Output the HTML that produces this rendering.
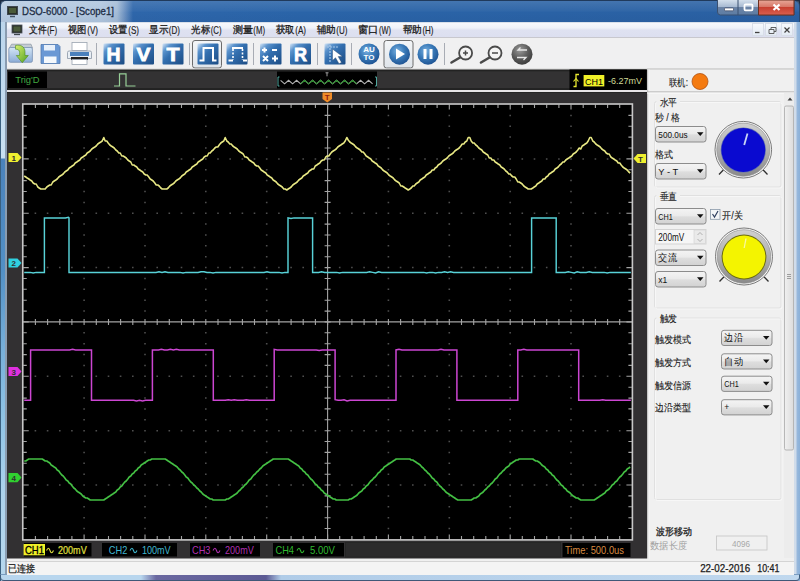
<!DOCTYPE html>
<html><head><meta charset="utf-8">
<style>
*{margin:0;padding:0;box-sizing:border-box}
html,body{width:800px;height:581px;overflow:hidden;background:#1c2c44}
body{position:relative;font-family:"Liberation Sans",sans-serif;font-size:12px;color:#000}
#titlebar{position:absolute;left:0;top:0;width:800px;height:22px;border-radius:6px 6px 0 0;
 background:linear-gradient(90deg,#b8cce2 0,#b0c6de 100px,#a4bcd6 116px,#6a90c0 124px,#2e66aa 132px,#2a64a8 300px,#2a60a2 100%);border-top:1px solid #203a5c;border-left:1px solid #284870;border-right:1px solid #284870}
#titlebar:after{content:"";position:absolute;left:0;top:0;right:0;height:21px;background:linear-gradient(180deg,rgba(255,255,255,.12) 0,rgba(255,255,255,.04) 45%,rgba(255,255,255,0) 55%,rgba(0,20,60,.04) 100%)}
#title{position:absolute;left:22px;top:3px;font-size:13px;color:#1e3048;letter-spacing:0.2px}
#lframe{position:absolute;left:0;top:22px;width:7px;height:559px;
 background:linear-gradient(180deg,#bcd6ec 0,#c8e0f2 136px,#4a82bc 137px,#5290c6 250px,#78b0da 330px,#90c4e6 400px,#acd2ec 470px,#b8d8ee 100%)}
#lframe:after{content:"";position:absolute;left:5px;top:0;width:2px;height:100%;background:#8a9cb0}#lframe:before{content:"";position:absolute;left:0;top:0;width:1px;height:100%;background:#3a6080}
#rframe{position:absolute;left:794px;top:22px;width:6px;height:559px;background:linear-gradient(90deg,#d0dcea 0,#d0dcea 2px,#98b8dc 3px,#8ab0d8 100%)}
#bframe{position:absolute;left:0;top:574px;width:800px;height:7px;background:linear-gradient(90deg,#b8d6ee 0,#b8d6ee 140px,#6a68a0 155px,#5c5a94 265px,#b0cce8 280px,#c0d8ee 100%);border-top:1px solid #7a9cc0;border-bottom:1px solid #405878;border-left:1px solid #3a5a7a;border-right:1px solid #3a5a7a;border-radius:0 0 4px 4px}
.wb{position:absolute;top:0;height:15px;border:1px solid #40587a;border-top:none}
#child{position:absolute;left:7px;top:22px;width:787px;height:552px;background:#f0f0f0;border-top:1px solid #d8e0ea}
#menubar{position:absolute;left:0;top:0;width:787px;height:15px;background:linear-gradient(180deg,#f6f8fc 0,#eef2f9 35%,#dfe2f1 50%,#dcdff0 100%);border-bottom:1px solid #c8c8ce}
.mi{position:absolute;top:1px;font-size:12px;color:#1a1a1a;white-space:nowrap}
.mdib{position:absolute;top:0px;width:12px;height:13px;background:linear-gradient(180deg,#f6f9fd,#e4ebf4);border:1px solid #d8dee8}
#toolbar{position:absolute;left:0;top:15px;width:787px;height:32px;background:#f0f0f1}
#panel{position:absolute;left:640px;top:47px;width:147px;height:489px;background:#f0f0f0;border-left:2px solid #d8d8d8}
.lbl{position:absolute;font-size:11px;color:#1a1a1a;white-space:nowrap}
.combo{position:absolute;width:52px;height:17px;border:1px solid #9a9a9a;border-radius:3px;background:linear-gradient(180deg,#f6f6f6 0,#ececec 45%,#dcdcdc 55%,#d8d8d8 100%);font-size:11px;padding-left:3px;line-height:15px;color:#111;white-space:nowrap}
.combo:after{content:"";position:absolute;right:5px;top:6px;border-left:4px solid transparent;border-right:4px solid transparent;border-top:4px solid #111}
#status{position:absolute;left:0;top:538px;width:787px;height:14px;background:#f4f4f4;border-top:1px solid #d4d4d4}
</style></head><body>
<div id="titlebar"></div>

<svg width="800" height="22" style="position:absolute;left:0;top:0">
 <rect x="7.5" y="6.5" width="10" height="8" fill="#2a3028" stroke="#404850"/>
 <rect x="9" y="8" width="7" height="5" fill="#4a5a38"/>
 <path d="M10,16.5h5" stroke="#405060" stroke-width="1.5"/>
 <defs>
  <linearGradient id="wbg" x1="0" y1="0" x2="0" y2="1"><stop offset="0" stop-color="#d4dfec"/><stop offset="0.45" stop-color="#a8bad2"/><stop offset="0.5" stop-color="#6c84a6"/><stop offset="1" stop-color="#5c7ca4"/></linearGradient>
  <linearGradient id="cbg" x1="0" y1="0" x2="0" y2="1"><stop offset="0" stop-color="#e8a898"/><stop offset="0.45" stop-color="#d87868"/><stop offset="0.5" stop-color="#c84030"/><stop offset="1" stop-color="#d86050"/></linearGradient>
 </defs>
 <path d="M717.5,0v12a3,3 0 0 0 3,3h73.5V0" fill="url(#wbg)" stroke="#3a5070"/>
 <path d="M758.5,0v15h35.5V0z" fill="url(#cbg)" stroke="#6a3020"/>
 <path d="M738,0v15" stroke="#3a5070"/>
 <rect x="724.5" y="8" width="9" height="2.8" rx="0.8" fill="#fff" stroke="#303850" stroke-width="0.6"/>
 <rect x="744.5" y="4.5" width="8" height="5.8" rx="1" fill="none" stroke="#fff" stroke-width="1.8"/>
 <path d="M773.5,4.5l6,5.5M779.5,4.5l-6,5.5" stroke="#fff" stroke-width="2.2"/>
</svg>
<div id="lframe"></div><div id="rframe"></div><div id="bframe"></div>
<div id="child">
 <div id="menubar">
  <div class="mdib" style="left:745px"></div>
  <div class="mdib" style="left:758px"></div>
  <div class="mdib" style="left:774px"></div>
 </div>
 <div id="toolbar"></div>
 <div id="status"></div>
</div>
<svg width="800" height="70" viewBox="0 0 800 70" style="position:absolute;left:0;top:0">
<defs>
 <linearGradient id="bsq" x1="0" y1="0" x2="1" y2="1"><stop offset="0" stop-color="#d8e8f8"/><stop offset="0.22" stop-color="#5a92cc"/><stop offset="0.45" stop-color="#3470b0"/><stop offset="1" stop-color="#1c4c84"/></linearGradient>
 <radialGradient id="bci" cx="0.4" cy="0.35" r="0.7"><stop offset="0" stop-color="#78b0e0"/><stop offset="0.5" stop-color="#3a7ab8"/><stop offset="1" stop-color="#1c5090"/></radialGradient>
 <radialGradient id="gci" cx="0.4" cy="0.3" r="0.75"><stop offset="0" stop-color="#9a9a9a"/><stop offset="0.55" stop-color="#5a5a5a"/><stop offset="1" stop-color="#3a3a3a"/></radialGradient>
 <linearGradient id="fold" x1="0" y1="0" x2="0" y2="1"><stop offset="0" stop-color="#d4e6f6"/><stop offset="1" stop-color="#8cacd6"/></linearGradient>
 <linearGradient id="grn" x1="0" y1="0" x2="1" y2="1"><stop offset="0" stop-color="#d8f070"/><stop offset="1" stop-color="#50a020"/></linearGradient>
 <linearGradient id="pbtn" x1="0" y1="0" x2="0" y2="1"><stop offset="0" stop-color="#f4f6f8"/><stop offset="1" stop-color="#dfe4ea"/></linearGradient>
</defs>
<!-- open -->
<path d="M9.5,48l2,-3.8h19.5l1.5,3.8z" fill="#c4ccd4" stroke="#8a96a4" stroke-width="0.7"/>
<rect x="8.8" y="47.5" width="23.6" height="14.8" rx="1.5" fill="url(#fold)" stroke="#7a92b2" stroke-width="0.8"/>
<path d="M15.5,45.5c5,-1.2 9.5,1 9.5,6.5v3.5h3.3l-6,7.2l-6,-7.2h3.3v-3c0,-2.3 -1.8,-3.6 -4.1,-3.3z" fill="url(#grn)" stroke="#4a8a20" stroke-width="0.6"/>
<!-- save -->
<path d="M41,44.5h17l2,2v17h-19z" fill="#6a98d4" stroke="#5078b0" stroke-width="0.8"/>
<rect x="44" y="45" width="11" height="5.5" fill="#e8f0fa"/>
<rect x="44" y="56.5" width="12.5" height="6.5" fill="#f4f8fc"/>
<!-- print -->
<rect x="72" y="42.5" width="15" height="8" fill="#fff" stroke="#9aa4b0" stroke-width="0.8"/>
<path d="M69,51h21a1.5,1.5 0 0 1 1.5,1.5v6h-24v-6a1.5,1.5 0 0 1 1.5,-1.5z" fill="#e8eef4" stroke="#8a96a4" stroke-width="0.8"/>
<rect x="70" y="52" width="19" height="4" fill="#4a80bc"/>
<rect x="71" y="57" width="17" height="3" fill="#202020"/>
<rect x="72" y="59.5" width="15" height="5" fill="#fff" stroke="#9aa4b0" stroke-width="0.8"/>
<!-- separators -->
<g fill="#a8acb4">
<rect x="96" y="43" width="1" height="22"/><rect x="189" y="43" width="1" height="22"/><rect x="253" y="43" width="1" height="22"/>
<rect x="317" y="43" width="1" height="22"/><rect x="351" y="43" width="1" height="22"/><rect x="444" y="43" width="1" height="22"/>
</g>
<!-- pressed borders -->
<rect x="192.5" y="40.5" width="29" height="27.5" rx="2.5" fill="url(#pbtn)" stroke="#6c6c6c"/>
<rect x="384" y="40.5" width="29" height="27.5" rx="2.5" fill="url(#pbtn)" stroke="#6c6c6c"/>
<!-- blue squares -->
<g fill="url(#bsq)">
<rect x="103.5" y="43.5" width="21" height="21" rx="1"/>
<rect x="133" y="43.5" width="21" height="21" rx="1"/>
<rect x="162.5" y="43.5" width="21" height="21" rx="1"/>
<rect x="197.5" y="43.5" width="21" height="21" rx="1"/>
<rect x="226.5" y="43.5" width="21" height="21" rx="1"/>
<rect x="260" y="43.5" width="21.5" height="21" rx="1"/>
<rect x="290" y="43.5" width="21" height="21" rx="1"/>
<rect x="324.5" y="43.5" width="21" height="21" rx="1"/>
</g>
<g fill="#fff" font-family="Liberation Sans" font-weight="bold" text-anchor="middle">
<text x="113.5" y="61" font-size="19" stroke="#fff" stroke-width="0.8" textLength="14" lengthAdjust="spacingAndGlyphs">H</text>
<text x="143.5" y="61" font-size="19" stroke="#fff" stroke-width="0.8" textLength="14" lengthAdjust="spacingAndGlyphs">V</text>
<text x="173" y="61" font-size="19" stroke="#fff" stroke-width="0.8" textLength="13" lengthAdjust="spacingAndGlyphs">T</text>
<text x="300.5" y="61" font-size="19" stroke="#fff" stroke-width="0.8" textLength="13" lengthAdjust="spacingAndGlyphs">R</text>
</g>
<path d="M199.5,60.5h4v-12.5h9.5v12.5h3.5" fill="none" stroke="#fff" stroke-width="2"/>
<path d="M228.5,60.5h4.5M232,48h11M243,60.5h4" fill="none" stroke="#fff" stroke-width="2"/><path d="M233,49v11M242.5,49v11" fill="none" stroke="#fff" stroke-width="1.6" stroke-dasharray="2,1.5"/>
<path d="M262,50h5M264.5,47.5v5M272,50h5M263,56l5,5M268,56l-5,5M272,58.5h6M275,55.5v6" stroke="#fff" stroke-width="2"/>
<path d="M327,47h12M330,45v18" stroke="#a8c8e8" stroke-width="1.2" stroke-dasharray="2,1"/>
<path d="M332.5,49v11.5l3,-2.8l3.5,6l2.5,-1.3l-3.3,-5.8h4.3z" fill="#fff" stroke="#1a3a60" stroke-width="0.4"/>
<!-- circles -->
<circle cx="369" cy="54" r="10.5" fill="url(#bci)"/>
<text x="369" y="52" font-family="Liberation Sans" font-weight="bold" font-size="8" fill="#fff" text-anchor="middle">AU</text>
<text x="369" y="60" font-family="Liberation Sans" font-weight="bold" font-size="8" fill="#fff" text-anchor="middle">TO</text>
<circle cx="399.5" cy="54.2" r="10.5" fill="url(#bci)"/>
<path d="M396,48.5v11l9,-5.5z" fill="#fff"/>
<circle cx="428" cy="54.2" r="10.5" fill="url(#bci)"/>
<rect x="423.5" y="49" width="3" height="10" fill="#fff"/><rect x="429.5" y="49" width="3" height="10" fill="#fff"/>
<!-- magnifiers -->
<circle cx="465.6" cy="53" r="6.5" fill="#f4f4f4" stroke="#4a4a4a" stroke-width="1.8"/>
<path d="M451.5,62.5l8.5,-5" stroke="#4a4a4a" stroke-width="2.6" stroke-linecap="round"/>
<path d="M463,53h5M465.5,50.5v5" stroke="#4a4a4a" stroke-width="1.5"/>
<circle cx="495" cy="53" r="6.5" fill="#f4f4f4" stroke="#4a4a4a" stroke-width="1.8"/>
<path d="M481,62.5l8.5,-5" stroke="#4a4a4a" stroke-width="2.6" stroke-linecap="round"/>
<path d="M492,53h6" stroke="#4a4a4a" stroke-width="1.5"/>
<circle cx="522" cy="54.2" r="10.5" fill="url(#gci)"/>
<path d="M527,50h-9l2.5,-2.5M517,57.5h9l-2.5,2.5" fill="none" stroke="#e8e8e8" stroke-width="1.3"/>
</svg>

<svg width="800" height="581" viewBox="0 0 800 581" style="position:absolute;left:0;top:0" font-family="Liberation Sans">
<defs>
<linearGradient id="cmb" x1="0" y1="0" x2="0" y2="1"><stop offset="0" stop-color="#f4f4f4"/><stop offset="0.45" stop-color="#ebebeb"/><stop offset="0.55" stop-color="#dddddd"/><stop offset="1" stop-color="#d2d2d2"/></linearGradient>
<radialGradient id="knobring" cx="0.5" cy="0.5" r="0.5"><stop offset="0.8" stop-color="#c0c0c0"/><stop offset="0.9" stop-color="#a0a0a0"/><stop offset="1" stop-color="#808080"/></radialGradient>
<linearGradient id="thumb" x1="0" y1="0" x2="1" y2="0"><stop offset="0" stop-color="#f0f0f0"/><stop offset="1" stop-color="#dcdcdc"/></linearGradient>
</defs>
<rect x="7" y="68.5" width="787" height="1" fill="#d4d4d4"/>
<rect x="647" y="69.5" width="147" height="489" fill="#f0f0f0"/>
<rect x="647" y="68.5" width="147" height="1" fill="#c8c8c8"/>
<rect x="647" y="69.5" width="1.5" height="489" fill="#c8c8c8"/>
<rect x="648.5" y="69.5" width="1" height="489" fill="#fafafa"/>
<rect x="647" y="91.5" width="147" height="1" fill="#a8a8a8"/>
<rect x="647" y="92.5" width="147" height="1" fill="#fcfcfc"/>
<text x="669" y="85.5" font-size="10" fill="#202020" textLength="19" lengthAdjust="spacingAndGlyphs" stroke="#202020" stroke-width="0.12">联机:</text>
<circle cx="700" cy="81.5" r="8" fill="#f47a10" stroke="#b05010" stroke-width="0.8"/>
<rect x="784" y="93" width="10" height="465" fill="#ececec"/>
<path d="M787.5,100.5l2.5,-3l2.5,3z" fill="#404040"/>
<rect x="784.5" y="106" width="9" height="344" rx="1.5" fill="url(#thumb)" stroke="#a8a8a8" stroke-width="0.8"/>
<path d="M787,274.5h4M787,276.5h4M787,278.5h4" stroke="#8a8a8a" stroke-width="0.8"/>
<rect x="654.5" y="101.5" width="126.5" height="85.5" rx="2" fill="none" stroke="#e0e0e0" stroke-width="1"/>
<rect x="654.5" y="101.5" width="126.5" height="85.5" rx="2" fill="none" stroke="#ffffff" stroke-width="0.5" transform="translate(1,1)"/>
<rect x="656.5" y="96.5" width="23.5" height="10" fill="#f0f0f0"/>
<text x="659.5" y="105.5" font-size="10" fill="#202020" textLength="17.5" lengthAdjust="spacingAndGlyphs" stroke="#202020" stroke-width="0.12">水平</text>
<rect x="654.5" y="195.5" width="126.5" height="112.5" rx="2" fill="none" stroke="#e0e0e0" stroke-width="1"/>
<rect x="654.5" y="195.5" width="126.5" height="112.5" rx="2" fill="none" stroke="#ffffff" stroke-width="0.5" transform="translate(1,1)"/>
<rect x="656.5" y="190.5" width="23.5" height="10" fill="#f0f0f0"/>
<text x="659.5" y="199.5" font-size="10" fill="#202020" textLength="17.5" lengthAdjust="spacingAndGlyphs" stroke="#202020" stroke-width="0.12">垂直</text>
<rect x="654.5" y="318" width="126.5" height="181.5" rx="2" fill="none" stroke="#e0e0e0" stroke-width="1"/>
<rect x="654.5" y="318" width="126.5" height="181.5" rx="2" fill="none" stroke="#ffffff" stroke-width="0.5" transform="translate(1,1)"/>
<rect x="656.5" y="313" width="23.5" height="10" fill="#f0f0f0"/>
<text x="659.5" y="322" font-size="10" fill="#202020" textLength="17.5" lengthAdjust="spacingAndGlyphs" stroke="#202020" stroke-width="0.12">触发</text>
<text x="655" y="121" font-size="10" fill="#202020" textLength="25" lengthAdjust="spacingAndGlyphs" stroke="#202020" stroke-width="0.12">秒 / 格</text>
<rect x="655.5" y="126.5" width="50.5" height="15.5" rx="2.5" fill="url(#cmb)" stroke="#8c8c8c" stroke-width="1"/>
<path d="M697.0,132.2h6.5l-3.25,3.8z" fill="#101010"/>
<text x="658.3" y="137.5" font-size="9.5" fill="#111" textLength="29.3" lengthAdjust="spacingAndGlyphs" >500.0us</text>
<text x="655" y="158" font-size="10" fill="#202020" textLength="18" lengthAdjust="spacingAndGlyphs" stroke="#202020" stroke-width="0.12">格式</text>
<rect x="655.5" y="163.5" width="50.5" height="15.5" rx="2.5" fill="url(#cmb)" stroke="#8c8c8c" stroke-width="1"/>
<path d="M697.0,169.2h6.5l-3.25,3.8z" fill="#101010"/>
<text x="658.3" y="174.5" font-size="9.5" fill="#111" textLength="20" lengthAdjust="spacingAndGlyphs" >Y - T</text>
<defs><linearGradient id="ringg" x1="0" y1="0" x2="0" y2="1"><stop offset="0" stop-color="#d0d0d0"/><stop offset="0.5" stop-color="#b0b0b0"/><stop offset="1" stop-color="#8a8a8a"/></linearGradient></defs>
<circle cx="743.3" cy="149.7" r="28.3" fill="#f8f8f8" stroke="#6a6a6a" stroke-width="0.9"/>
<circle cx="743.3" cy="149.7" r="26.6" fill="url(#ringg)" stroke="#8a8a8a" stroke-width="0.6"/>
<circle cx="743.3" cy="150" r="22.6" fill="#6070b0"/>
<circle cx="743.3" cy="150" r="21.9" fill="#0a0ad0"/>
<path d="M747.5,133.5l-3.3,11.5" stroke="#c8d4f4" stroke-width="1.8"/>
<path d="M719,174.5l4.3,-4.5M767.5,174.5l-4.3,-4.5" stroke="#303030" stroke-width="1.3"/>
<rect x="655.5" y="208.5" width="50.5" height="15.5" rx="2.5" fill="url(#cmb)" stroke="#8c8c8c" stroke-width="1"/>
<path d="M697.0,214.2h6.5l-3.25,3.8z" fill="#101010"/>
<text x="658.3" y="219.5" font-size="9.5" fill="#111" textLength="14.5" lengthAdjust="spacingAndGlyphs" >CH1</text>
<rect x="710.5" y="209.5" width="9.5" height="9.8" fill="#f4f6f8" stroke="#8a9aaa" stroke-width="0.8"/>
<path d="M712.5,214l2,3l3.5,-6" fill="none" stroke="#304060" stroke-width="1.2"/>
<text x="722.2" y="219" font-size="10" fill="#202020" textLength="20.5" lengthAdjust="spacingAndGlyphs" stroke="#202020" stroke-width="0.12">开/关</text>
<rect x="655.5" y="229.5" width="50.5" height="14.5" fill="#f6f6f6" stroke="#d4d4d4" stroke-width="1"/>
<text x="658.3" y="240.5" font-size="10" fill="#111" textLength="26" lengthAdjust="spacingAndGlyphs" >200mV</text>
<rect x="694" y="230" width="11.5" height="13.5" fill="#eaeaea" stroke="#d0d0d0" stroke-width="0.6"/>
<path d="M697.5,235l2.5,-2.5l2.5,2.5M697.5,239l2.5,2.5l2.5,-2.5" fill="none" stroke="#a0a0a0" stroke-width="0.8"/>
<rect x="655.5" y="250.0" width="50.5" height="15.5" rx="2.5" fill="url(#cmb)" stroke="#8c8c8c" stroke-width="1"/>
<path d="M697.0,255.8h6.5l-3.25,3.8z" fill="#101010"/>
<text x="658.3" y="261" font-size="9.5" fill="#111" textLength="18.5" lengthAdjust="spacingAndGlyphs" >交流</text>
<rect x="655.5" y="271.5" width="50.5" height="15.5" rx="2.5" fill="url(#cmb)" stroke="#8c8c8c" stroke-width="1"/>
<path d="M697.0,277.2h6.5l-3.25,3.8z" fill="#101010"/>
<text x="658.3" y="282.5" font-size="9.5" fill="#111" textLength="9" lengthAdjust="spacingAndGlyphs" >x1</text>
<circle cx="744" cy="256.5" r="28.5" fill="#f8f8f8" stroke="#6a6a6a" stroke-width="0.9"/>
<circle cx="744" cy="256.5" r="26.8" fill="url(#ringg)" stroke="#8a8a8a" stroke-width="0.6"/>
<circle cx="744" cy="257" r="22.4" fill="#6a6a10"/>
<circle cx="744" cy="257" r="21.4" fill="#f4f400"/>
<path d="M746,238.5l-1.8,9.5" stroke="#f8f8a0" stroke-width="1.3"/>
<path d="M719.5,281.5l4.3,-4.5M768.5,281.5l-4.3,-4.5" stroke="#303030" stroke-width="1.3"/>
<text x="655" y="342.5" font-size="10" fill="#202020" textLength="36" lengthAdjust="spacingAndGlyphs" stroke="#202020" stroke-width="0.12">触发模式</text>
<rect x="721.5" y="330.3" width="50.5" height="15.199999999999989" rx="2.5" fill="url(#cmb)" stroke="#8c8c8c" stroke-width="1"/>
<path d="M763.0,335.9h6.5l-3.25,3.8z" fill="#101010"/>
<text x="724.3" y="341.0" font-size="9.5" fill="#111" textLength="18.5" lengthAdjust="spacingAndGlyphs" >边沿</text>
<text x="655" y="365.5" font-size="10" fill="#202020" textLength="36" lengthAdjust="spacingAndGlyphs" stroke="#202020" stroke-width="0.12">触发方式</text>
<rect x="721.5" y="353.8" width="50.5" height="15.199999999999989" rx="2.5" fill="url(#cmb)" stroke="#8c8c8c" stroke-width="1"/>
<path d="M763.0,359.4h6.5l-3.25,3.8z" fill="#101010"/>
<text x="724.3" y="364.5" font-size="9.5" fill="#111" textLength="18.5" lengthAdjust="spacingAndGlyphs" >自动</text>
<text x="655" y="388.5" font-size="10" fill="#202020" textLength="36" lengthAdjust="spacingAndGlyphs" stroke="#202020" stroke-width="0.12">触发信源</text>
<rect x="721.5" y="376.2" width="50.5" height="15.199999999999989" rx="2.5" fill="url(#cmb)" stroke="#8c8c8c" stroke-width="1"/>
<path d="M763.0,381.8h6.5l-3.25,3.8z" fill="#101010"/>
<text x="724.3" y="386.9" font-size="9.5" fill="#111" textLength="14.5" lengthAdjust="spacingAndGlyphs" >CH1</text>
<text x="655" y="411" font-size="10" fill="#202020" textLength="36" lengthAdjust="spacingAndGlyphs" stroke="#202020" stroke-width="0.12">边沿类型</text>
<rect x="721.5" y="399.7" width="50.5" height="15.199999999999989" rx="2.5" fill="url(#cmb)" stroke="#8c8c8c" stroke-width="1"/>
<path d="M763.0,405.3h6.5l-3.25,3.8z" fill="#101010"/>
<text x="724.3" y="410.4" font-size="9.5" fill="#111" textLength="5" lengthAdjust="spacingAndGlyphs" >+</text>
<text x="656" y="535" font-size="10" fill="#202020" textLength="36" lengthAdjust="spacingAndGlyphs" stroke="#202020" stroke-width="0.3">波形移动</text>
<text x="650" y="549" font-size="10" fill="#a0a0a0" textLength="37" lengthAdjust="spacingAndGlyphs" >数据长度</text>
<rect x="716.5" y="536" width="50.5" height="14" fill="#f0f0f0" stroke="#c4c4c4" stroke-width="0.8"/>
<text x="732" y="546.5" font-size="9" fill="#a8a8a8" textLength="18" lengthAdjust="spacingAndGlyphs" >4096</text>
</svg>
<svg width="800" height="581" viewBox="0 0 800 581" style="position:absolute;left:0;top:0" font-family="Liberation Sans">
<rect x="7" y="69.5" width="640" height="20.5" fill="#222"/>
<rect x="7" y="71.3" width="640" height="16.8" fill="#333233"/>
<rect x="7" y="90" width="640" height="2" fill="#e6e4e6"/>
<rect x="7" y="92" width="640" height="466.5" fill="#323032"/>
<rect x="7" y="92" width="640" height="1" fill="#262626"/>
<rect x="8" y="71.5" width="39" height="16.5" fill="#000"/>
<text x="15.3" y="83.3" font-size="9.5" fill="#40a840" textLength="24.3" lengthAdjust="spacingAndGlyphs" >Trig'D</text>
<polyline points="114,86 119.5,86 119.5,73.8 126,73.8 126,86 135.5,86" fill="none" stroke="#98d098" stroke-width="1.2"/>
<rect x="277" y="71.5" width="100" height="17" fill="#000"/>
<path d="M279.5,77 h-1.5 v9 h1.5 M375,77 h1.5 v9 h-1.5" fill="none" stroke="#50a8a0" stroke-width="1"/>
<polyline points="280.6,80.3 284.6,83.8 288.6,80.3 292.6,83.8 296.6,80.3 300.6,83.8 304.6,80.3 308.6,83.8 312.6,80.3 316.6,83.8 320.6,80.3 324.6,83.8 328.6,80.3 332.6,83.8 336.6,80.3 340.6,83.8 344.6,80.3 348.6,83.8 352.6,80.3 356.6,83.8 360.6,80.3 364.6,83.8 368.6,80.3 372.6,83.8" fill="none" stroke="#b4b4b4" stroke-width="1.1"/>
<polyline points="300.6,83.8 304.6,80.3 308.6,83.8 312.6,80.3 316.6,83.8 320.6,80.3 324.6,83.8 328.6,80.3 332.6,83.8 336.6,80.3 340.6,83.8 344.6,80.3 348.6,83.8 352.6,80.3 356.6,83.8" fill="none" stroke="#2e8a2e" stroke-width="1.1"/>
<path d="M325.5,72.8 h3 M327,72.8 v3.5" stroke="#a0a0a0" stroke-width="1"/>
<rect x="569.5" y="69.5" width="77.2" height="20.5" fill="#000"/>
<path d="M573.5,86.5 h2.5 v-12 h3" fill="none" stroke="#e8e830" stroke-width="1.3"/><path d="M573.5,81.5 l2.5,-3 l2.5,3" fill="none" stroke="#e8e830" stroke-width="1.1"/>
<rect x="583.6" y="75" width="20.7" height="11.4" fill="#f0f028"/>
<text x="585" y="84.5" font-size="9.5" fill="#000" textLength="18" lengthAdjust="spacingAndGlyphs" >CH1</text>
<text x="608" y="84" font-size="9.5" fill="#d0dc98" textLength="34" lengthAdjust="spacingAndGlyphs" >-6.27mV</text>
<rect x="23.25" y="104.5" width="608.65" height="434.9" fill="#000"/>
<path d="M83.3,115.4h1.6M83.3,126.2h1.6M83.3,137.1h1.6M83.3,148.0h1.6M83.3,169.7h1.6M83.3,180.6h1.6M83.3,191.5h1.6M83.3,202.4h1.6M83.3,224.1h1.6M83.3,235.0h1.6M83.3,245.8h1.6M83.3,256.7h1.6M83.3,278.5h1.6M83.3,289.3h1.6M83.3,300.2h1.6M83.3,311.1h1.6M83.3,332.8h1.6M83.3,343.7h1.6M83.3,354.6h1.6M83.3,365.4h1.6M83.3,387.2h1.6M83.3,398.1h1.6M83.3,408.9h1.6M83.3,419.8h1.6M83.3,441.5h1.6M83.3,452.4h1.6M83.3,463.3h1.6M83.3,474.2h1.6M83.3,495.9h1.6M83.3,506.8h1.6M83.3,517.7h1.6M83.3,528.5h1.6M144.2,115.4h1.6M144.2,126.2h1.6M144.2,137.1h1.6M144.2,148.0h1.6M144.2,169.7h1.6M144.2,180.6h1.6M144.2,191.5h1.6M144.2,202.4h1.6M144.2,224.1h1.6M144.2,235.0h1.6M144.2,245.8h1.6M144.2,256.7h1.6M144.2,278.5h1.6M144.2,289.3h1.6M144.2,300.2h1.6M144.2,311.1h1.6M144.2,332.8h1.6M144.2,343.7h1.6M144.2,354.6h1.6M144.2,365.4h1.6M144.2,387.2h1.6M144.2,398.1h1.6M144.2,408.9h1.6M144.2,419.8h1.6M144.2,441.5h1.6M144.2,452.4h1.6M144.2,463.3h1.6M144.2,474.2h1.6M144.2,495.9h1.6M144.2,506.8h1.6M144.2,517.7h1.6M144.2,528.5h1.6M205.0,115.4h1.6M205.0,126.2h1.6M205.0,137.1h1.6M205.0,148.0h1.6M205.0,169.7h1.6M205.0,180.6h1.6M205.0,191.5h1.6M205.0,202.4h1.6M205.0,224.1h1.6M205.0,235.0h1.6M205.0,245.8h1.6M205.0,256.7h1.6M205.0,278.5h1.6M205.0,289.3h1.6M205.0,300.2h1.6M205.0,311.1h1.6M205.0,332.8h1.6M205.0,343.7h1.6M205.0,354.6h1.6M205.0,365.4h1.6M205.0,387.2h1.6M205.0,398.1h1.6M205.0,408.9h1.6M205.0,419.8h1.6M205.0,441.5h1.6M205.0,452.4h1.6M205.0,463.3h1.6M205.0,474.2h1.6M205.0,495.9h1.6M205.0,506.8h1.6M205.0,517.7h1.6M205.0,528.5h1.6M265.9,115.4h1.6M265.9,126.2h1.6M265.9,137.1h1.6M265.9,148.0h1.6M265.9,169.7h1.6M265.9,180.6h1.6M265.9,191.5h1.6M265.9,202.4h1.6M265.9,224.1h1.6M265.9,235.0h1.6M265.9,245.8h1.6M265.9,256.7h1.6M265.9,278.5h1.6M265.9,289.3h1.6M265.9,300.2h1.6M265.9,311.1h1.6M265.9,332.8h1.6M265.9,343.7h1.6M265.9,354.6h1.6M265.9,365.4h1.6M265.9,387.2h1.6M265.9,398.1h1.6M265.9,408.9h1.6M265.9,419.8h1.6M265.9,441.5h1.6M265.9,452.4h1.6M265.9,463.3h1.6M265.9,474.2h1.6M265.9,495.9h1.6M265.9,506.8h1.6M265.9,517.7h1.6M265.9,528.5h1.6M387.6,115.4h1.6M387.6,126.2h1.6M387.6,137.1h1.6M387.6,148.0h1.6M387.6,169.7h1.6M387.6,180.6h1.6M387.6,191.5h1.6M387.6,202.4h1.6M387.6,224.1h1.6M387.6,235.0h1.6M387.6,245.8h1.6M387.6,256.7h1.6M387.6,278.5h1.6M387.6,289.3h1.6M387.6,300.2h1.6M387.6,311.1h1.6M387.6,332.8h1.6M387.6,343.7h1.6M387.6,354.6h1.6M387.6,365.4h1.6M387.6,387.2h1.6M387.6,398.1h1.6M387.6,408.9h1.6M387.6,419.8h1.6M387.6,441.5h1.6M387.6,452.4h1.6M387.6,463.3h1.6M387.6,474.2h1.6M387.6,495.9h1.6M387.6,506.8h1.6M387.6,517.7h1.6M387.6,528.5h1.6M448.5,115.4h1.6M448.5,126.2h1.6M448.5,137.1h1.6M448.5,148.0h1.6M448.5,169.7h1.6M448.5,180.6h1.6M448.5,191.5h1.6M448.5,202.4h1.6M448.5,224.1h1.6M448.5,235.0h1.6M448.5,245.8h1.6M448.5,256.7h1.6M448.5,278.5h1.6M448.5,289.3h1.6M448.5,300.2h1.6M448.5,311.1h1.6M448.5,332.8h1.6M448.5,343.7h1.6M448.5,354.6h1.6M448.5,365.4h1.6M448.5,387.2h1.6M448.5,398.1h1.6M448.5,408.9h1.6M448.5,419.8h1.6M448.5,441.5h1.6M448.5,452.4h1.6M448.5,463.3h1.6M448.5,474.2h1.6M448.5,495.9h1.6M448.5,506.8h1.6M448.5,517.7h1.6M448.5,528.5h1.6M509.4,115.4h1.6M509.4,126.2h1.6M509.4,137.1h1.6M509.4,148.0h1.6M509.4,169.7h1.6M509.4,180.6h1.6M509.4,191.5h1.6M509.4,202.4h1.6M509.4,224.1h1.6M509.4,235.0h1.6M509.4,245.8h1.6M509.4,256.7h1.6M509.4,278.5h1.6M509.4,289.3h1.6M509.4,300.2h1.6M509.4,311.1h1.6M509.4,332.8h1.6M509.4,343.7h1.6M509.4,354.6h1.6M509.4,365.4h1.6M509.4,387.2h1.6M509.4,398.1h1.6M509.4,408.9h1.6M509.4,419.8h1.6M509.4,441.5h1.6M509.4,452.4h1.6M509.4,463.3h1.6M509.4,474.2h1.6M509.4,495.9h1.6M509.4,506.8h1.6M509.4,517.7h1.6M509.4,528.5h1.6M570.2,115.4h1.6M570.2,126.2h1.6M570.2,137.1h1.6M570.2,148.0h1.6M570.2,169.7h1.6M570.2,180.6h1.6M570.2,191.5h1.6M570.2,202.4h1.6M570.2,224.1h1.6M570.2,235.0h1.6M570.2,245.8h1.6M570.2,256.7h1.6M570.2,278.5h1.6M570.2,289.3h1.6M570.2,300.2h1.6M570.2,311.1h1.6M570.2,332.8h1.6M570.2,343.7h1.6M570.2,354.6h1.6M570.2,365.4h1.6M570.2,387.2h1.6M570.2,398.1h1.6M570.2,408.9h1.6M570.2,419.8h1.6M570.2,441.5h1.6M570.2,452.4h1.6M570.2,463.3h1.6M570.2,474.2h1.6M570.2,495.9h1.6M570.2,506.8h1.6M570.2,517.7h1.6M570.2,528.5h1.6M34.6,158.9h1.6M46.8,158.9h1.6M59.0,158.9h1.6M71.1,158.9h1.6M83.3,158.9h1.6M95.5,158.9h1.6M107.7,158.9h1.6M119.8,158.9h1.6M132.0,158.9h1.6M144.2,158.9h1.6M156.4,158.9h1.6M168.5,158.9h1.6M180.7,158.9h1.6M192.9,158.9h1.6M205.0,158.9h1.6M217.2,158.9h1.6M229.4,158.9h1.6M241.6,158.9h1.6M253.7,158.9h1.6M265.9,158.9h1.6M278.1,158.9h1.6M290.3,158.9h1.6M302.4,158.9h1.6M314.6,158.9h1.6M326.8,158.9h1.6M338.9,158.9h1.6M351.1,158.9h1.6M363.3,158.9h1.6M375.5,158.9h1.6M387.6,158.9h1.6M399.8,158.9h1.6M412.0,158.9h1.6M424.2,158.9h1.6M436.3,158.9h1.6M448.5,158.9h1.6M460.7,158.9h1.6M472.9,158.9h1.6M485.0,158.9h1.6M497.2,158.9h1.6M509.4,158.9h1.6M521.5,158.9h1.6M533.7,158.9h1.6M545.9,158.9h1.6M558.1,158.9h1.6M570.2,158.9h1.6M582.4,158.9h1.6M594.6,158.9h1.6M606.8,158.9h1.6M618.9,158.9h1.6M34.6,213.2h1.6M46.8,213.2h1.6M59.0,213.2h1.6M71.1,213.2h1.6M83.3,213.2h1.6M95.5,213.2h1.6M107.7,213.2h1.6M119.8,213.2h1.6M132.0,213.2h1.6M144.2,213.2h1.6M156.4,213.2h1.6M168.5,213.2h1.6M180.7,213.2h1.6M192.9,213.2h1.6M205.0,213.2h1.6M217.2,213.2h1.6M229.4,213.2h1.6M241.6,213.2h1.6M253.7,213.2h1.6M265.9,213.2h1.6M278.1,213.2h1.6M290.3,213.2h1.6M302.4,213.2h1.6M314.6,213.2h1.6M326.8,213.2h1.6M338.9,213.2h1.6M351.1,213.2h1.6M363.3,213.2h1.6M375.5,213.2h1.6M387.6,213.2h1.6M399.8,213.2h1.6M412.0,213.2h1.6M424.2,213.2h1.6M436.3,213.2h1.6M448.5,213.2h1.6M460.7,213.2h1.6M472.9,213.2h1.6M485.0,213.2h1.6M497.2,213.2h1.6M509.4,213.2h1.6M521.5,213.2h1.6M533.7,213.2h1.6M545.9,213.2h1.6M558.1,213.2h1.6M570.2,213.2h1.6M582.4,213.2h1.6M594.6,213.2h1.6M606.8,213.2h1.6M618.9,213.2h1.6M34.6,267.6h1.6M46.8,267.6h1.6M59.0,267.6h1.6M71.1,267.6h1.6M83.3,267.6h1.6M95.5,267.6h1.6M107.7,267.6h1.6M119.8,267.6h1.6M132.0,267.6h1.6M144.2,267.6h1.6M156.4,267.6h1.6M168.5,267.6h1.6M180.7,267.6h1.6M192.9,267.6h1.6M205.0,267.6h1.6M217.2,267.6h1.6M229.4,267.6h1.6M241.6,267.6h1.6M253.7,267.6h1.6M265.9,267.6h1.6M278.1,267.6h1.6M290.3,267.6h1.6M302.4,267.6h1.6M314.6,267.6h1.6M326.8,267.6h1.6M338.9,267.6h1.6M351.1,267.6h1.6M363.3,267.6h1.6M375.5,267.6h1.6M387.6,267.6h1.6M399.8,267.6h1.6M412.0,267.6h1.6M424.2,267.6h1.6M436.3,267.6h1.6M448.5,267.6h1.6M460.7,267.6h1.6M472.9,267.6h1.6M485.0,267.6h1.6M497.2,267.6h1.6M509.4,267.6h1.6M521.5,267.6h1.6M533.7,267.6h1.6M545.9,267.6h1.6M558.1,267.6h1.6M570.2,267.6h1.6M582.4,267.6h1.6M594.6,267.6h1.6M606.8,267.6h1.6M618.9,267.6h1.6M34.6,376.3h1.6M46.8,376.3h1.6M59.0,376.3h1.6M71.1,376.3h1.6M83.3,376.3h1.6M95.5,376.3h1.6M107.7,376.3h1.6M119.8,376.3h1.6M132.0,376.3h1.6M144.2,376.3h1.6M156.4,376.3h1.6M168.5,376.3h1.6M180.7,376.3h1.6M192.9,376.3h1.6M205.0,376.3h1.6M217.2,376.3h1.6M229.4,376.3h1.6M241.6,376.3h1.6M253.7,376.3h1.6M265.9,376.3h1.6M278.1,376.3h1.6M290.3,376.3h1.6M302.4,376.3h1.6M314.6,376.3h1.6M326.8,376.3h1.6M338.9,376.3h1.6M351.1,376.3h1.6M363.3,376.3h1.6M375.5,376.3h1.6M387.6,376.3h1.6M399.8,376.3h1.6M412.0,376.3h1.6M424.2,376.3h1.6M436.3,376.3h1.6M448.5,376.3h1.6M460.7,376.3h1.6M472.9,376.3h1.6M485.0,376.3h1.6M497.2,376.3h1.6M509.4,376.3h1.6M521.5,376.3h1.6M533.7,376.3h1.6M545.9,376.3h1.6M558.1,376.3h1.6M570.2,376.3h1.6M582.4,376.3h1.6M594.6,376.3h1.6M606.8,376.3h1.6M618.9,376.3h1.6M34.6,430.7h1.6M46.8,430.7h1.6M59.0,430.7h1.6M71.1,430.7h1.6M83.3,430.7h1.6M95.5,430.7h1.6M107.7,430.7h1.6M119.8,430.7h1.6M132.0,430.7h1.6M144.2,430.7h1.6M156.4,430.7h1.6M168.5,430.7h1.6M180.7,430.7h1.6M192.9,430.7h1.6M205.0,430.7h1.6M217.2,430.7h1.6M229.4,430.7h1.6M241.6,430.7h1.6M253.7,430.7h1.6M265.9,430.7h1.6M278.1,430.7h1.6M290.3,430.7h1.6M302.4,430.7h1.6M314.6,430.7h1.6M326.8,430.7h1.6M338.9,430.7h1.6M351.1,430.7h1.6M363.3,430.7h1.6M375.5,430.7h1.6M387.6,430.7h1.6M399.8,430.7h1.6M412.0,430.7h1.6M424.2,430.7h1.6M436.3,430.7h1.6M448.5,430.7h1.6M460.7,430.7h1.6M472.9,430.7h1.6M485.0,430.7h1.6M497.2,430.7h1.6M509.4,430.7h1.6M521.5,430.7h1.6M533.7,430.7h1.6M545.9,430.7h1.6M558.1,430.7h1.6M570.2,430.7h1.6M582.4,430.7h1.6M594.6,430.7h1.6M606.8,430.7h1.6M618.9,430.7h1.6M34.6,485.0h1.6M46.8,485.0h1.6M59.0,485.0h1.6M71.1,485.0h1.6M83.3,485.0h1.6M95.5,485.0h1.6M107.7,485.0h1.6M119.8,485.0h1.6M132.0,485.0h1.6M144.2,485.0h1.6M156.4,485.0h1.6M168.5,485.0h1.6M180.7,485.0h1.6M192.9,485.0h1.6M205.0,485.0h1.6M217.2,485.0h1.6M229.4,485.0h1.6M241.6,485.0h1.6M253.7,485.0h1.6M265.9,485.0h1.6M278.1,485.0h1.6M290.3,485.0h1.6M302.4,485.0h1.6M314.6,485.0h1.6M326.8,485.0h1.6M338.9,485.0h1.6M351.1,485.0h1.6M363.3,485.0h1.6M375.5,485.0h1.6M387.6,485.0h1.6M399.8,485.0h1.6M412.0,485.0h1.6M424.2,485.0h1.6M436.3,485.0h1.6M448.5,485.0h1.6M460.7,485.0h1.6M472.9,485.0h1.6M485.0,485.0h1.6M497.2,485.0h1.6M509.4,485.0h1.6M521.5,485.0h1.6M533.7,485.0h1.6M545.9,485.0h1.6M558.1,485.0h1.6M570.2,485.0h1.6M582.4,485.0h1.6M594.6,485.0h1.6M606.8,485.0h1.6M618.9,485.0h1.6" stroke="#4e4e4e" stroke-width="1.5"/>
<path d="M327.6,104.5V539.4M23.25,321.9H631.9" stroke="#a4a4a4" stroke-width="1.1"/>
<path d="M35.4,318.9v6M35.4,104.5v3.5M35.4,539.4v-3.5M47.6,318.9v6M47.6,104.5v3.5M47.6,539.4v-3.5M59.8,318.9v6M59.8,104.5v3.5M59.8,539.4v-3.5M71.9,318.9v6M71.9,104.5v3.5M71.9,539.4v-3.5M84.1,318.9v6M84.1,104.5v5M84.1,539.4v-5M96.3,318.9v6M96.3,104.5v3.5M96.3,539.4v-3.5M108.5,318.9v6M108.5,104.5v3.5M108.5,539.4v-3.5M120.6,318.9v6M120.6,104.5v3.5M120.6,539.4v-3.5M132.8,318.9v6M132.8,104.5v3.5M132.8,539.4v-3.5M145.0,318.9v6M145.0,104.5v5M145.0,539.4v-5M157.2,318.9v6M157.2,104.5v3.5M157.2,539.4v-3.5M169.3,318.9v6M169.3,104.5v3.5M169.3,539.4v-3.5M181.5,318.9v6M181.5,104.5v3.5M181.5,539.4v-3.5M193.7,318.9v6M193.7,104.5v3.5M193.7,539.4v-3.5M205.8,318.9v6M205.8,104.5v5M205.8,539.4v-5M218.0,318.9v6M218.0,104.5v3.5M218.0,539.4v-3.5M230.2,318.9v6M230.2,104.5v3.5M230.2,539.4v-3.5M242.4,318.9v6M242.4,104.5v3.5M242.4,539.4v-3.5M254.5,318.9v6M254.5,104.5v3.5M254.5,539.4v-3.5M266.7,318.9v6M266.7,104.5v5M266.7,539.4v-5M278.9,318.9v6M278.9,104.5v3.5M278.9,539.4v-3.5M291.1,318.9v6M291.1,104.5v3.5M291.1,539.4v-3.5M303.2,318.9v6M303.2,104.5v3.5M303.2,539.4v-3.5M315.4,318.9v6M315.4,104.5v3.5M315.4,539.4v-3.5M327.6,318.9v6M327.6,104.5v5M327.6,539.4v-5M339.7,318.9v6M339.7,104.5v3.5M339.7,539.4v-3.5M351.9,318.9v6M351.9,104.5v3.5M351.9,539.4v-3.5M364.1,318.9v6M364.1,104.5v3.5M364.1,539.4v-3.5M376.3,318.9v6M376.3,104.5v3.5M376.3,539.4v-3.5M388.4,318.9v6M388.4,104.5v5M388.4,539.4v-5M400.6,318.9v6M400.6,104.5v3.5M400.6,539.4v-3.5M412.8,318.9v6M412.8,104.5v3.5M412.8,539.4v-3.5M425.0,318.9v6M425.0,104.5v3.5M425.0,539.4v-3.5M437.1,318.9v6M437.1,104.5v3.5M437.1,539.4v-3.5M449.3,318.9v6M449.3,104.5v5M449.3,539.4v-5M461.5,318.9v6M461.5,104.5v3.5M461.5,539.4v-3.5M473.7,318.9v6M473.7,104.5v3.5M473.7,539.4v-3.5M485.8,318.9v6M485.8,104.5v3.5M485.8,539.4v-3.5M498.0,318.9v6M498.0,104.5v3.5M498.0,539.4v-3.5M510.2,318.9v6M510.2,104.5v5M510.2,539.4v-5M522.3,318.9v6M522.3,104.5v3.5M522.3,539.4v-3.5M534.5,318.9v6M534.5,104.5v3.5M534.5,539.4v-3.5M546.7,318.9v6M546.7,104.5v3.5M546.7,539.4v-3.5M558.9,318.9v6M558.9,104.5v3.5M558.9,539.4v-3.5M571.0,318.9v6M571.0,104.5v5M571.0,539.4v-5M583.2,318.9v6M583.2,104.5v3.5M583.2,539.4v-3.5M595.4,318.9v6M595.4,104.5v3.5M595.4,539.4v-3.5M607.6,318.9v6M607.6,104.5v3.5M607.6,539.4v-3.5M619.7,318.9v6M619.7,104.5v3.5M619.7,539.4v-3.5M324.6,115.4h6M23.25,115.4h3.5M631.9,115.4h-3.5M324.6,126.2h6M23.25,126.2h3.5M631.9,126.2h-3.5M324.6,137.1h6M23.25,137.1h3.5M631.9,137.1h-3.5M324.6,148.0h6M23.25,148.0h3.5M631.9,148.0h-3.5M324.6,158.9h6M23.25,158.9h5.5M631.9,158.9h-5.5M324.6,169.7h6M23.25,169.7h3.5M631.9,169.7h-3.5M324.6,180.6h6M23.25,180.6h3.5M631.9,180.6h-3.5M324.6,191.5h6M23.25,191.5h3.5M631.9,191.5h-3.5M324.6,202.4h6M23.25,202.4h3.5M631.9,202.4h-3.5M324.6,213.2h6M23.25,213.2h5.5M631.9,213.2h-5.5M324.6,224.1h6M23.25,224.1h3.5M631.9,224.1h-3.5M324.6,235.0h6M23.25,235.0h3.5M631.9,235.0h-3.5M324.6,245.8h6M23.25,245.8h3.5M631.9,245.8h-3.5M324.6,256.7h6M23.25,256.7h3.5M631.9,256.7h-3.5M324.6,267.6h6M23.25,267.6h5.5M631.9,267.6h-5.5M324.6,278.5h6M23.25,278.5h3.5M631.9,278.5h-3.5M324.6,289.3h6M23.25,289.3h3.5M631.9,289.3h-3.5M324.6,300.2h6M23.25,300.2h3.5M631.9,300.2h-3.5M324.6,311.1h6M23.25,311.1h3.5M631.9,311.1h-3.5M324.6,321.9h6M23.25,321.9h5.5M631.9,321.9h-5.5M324.6,332.8h6M23.25,332.8h3.5M631.9,332.8h-3.5M324.6,343.7h6M23.25,343.7h3.5M631.9,343.7h-3.5M324.6,354.6h6M23.25,354.6h3.5M631.9,354.6h-3.5M324.6,365.4h6M23.25,365.4h3.5M631.9,365.4h-3.5M324.6,376.3h6M23.25,376.3h5.5M631.9,376.3h-5.5M324.6,387.2h6M23.25,387.2h3.5M631.9,387.2h-3.5M324.6,398.1h6M23.25,398.1h3.5M631.9,398.1h-3.5M324.6,408.9h6M23.25,408.9h3.5M631.9,408.9h-3.5M324.6,419.8h6M23.25,419.8h3.5M631.9,419.8h-3.5M324.6,430.7h6M23.25,430.7h5.5M631.9,430.7h-5.5M324.6,441.5h6M23.25,441.5h3.5M631.9,441.5h-3.5M324.6,452.4h6M23.25,452.4h3.5M631.9,452.4h-3.5M324.6,463.3h6M23.25,463.3h3.5M631.9,463.3h-3.5M324.6,474.2h6M23.25,474.2h3.5M631.9,474.2h-3.5M324.6,485.0h6M23.25,485.0h5.5M631.9,485.0h-5.5M324.6,495.9h6M23.25,495.9h3.5M631.9,495.9h-3.5M324.6,506.8h6M23.25,506.8h3.5M631.9,506.8h-3.5M324.6,517.7h6M23.25,517.7h3.5M631.9,517.7h-3.5M324.6,528.5h6M23.25,528.5h3.5M631.9,528.5h-3.5" stroke="#a4a4a4" stroke-width="1.1"/>
<rect x="22.75" y="104.0" width="609.65" height="435.9" fill="none" stroke="#c8c8c8" stroke-width="1.6"/>
<polyline points="24.2,176.0 25.8,177.0 27.2,178.0 28.8,179.0 30.2,180.0 31.8,181.0 33.2,183.0 34.8,184.0 36.2,184.0 37.8,187.0 39.2,188.0 40.8,189.0 42.2,189.0 43.8,189.0 45.2,189.0 46.8,187.0 48.2,186.0 49.8,185.0 51.2,185.0 52.8,182.0 54.2,181.0 55.8,180.0 57.2,179.0 58.8,177.0 60.2,176.0 61.8,175.0 63.2,174.0 64.8,172.0 66.2,171.0 67.8,170.0 69.2,168.0 70.8,167.0 72.2,166.0 73.8,165.0 75.2,163.0 76.8,162.0 78.2,161.0 79.8,160.0 81.2,158.0 82.8,157.0 84.2,156.0 85.8,155.0 87.2,153.0 88.8,152.0 90.2,151.0 91.8,149.0 93.2,148.0 94.8,147.0 96.2,146.0 97.8,144.0 99.2,143.0 100.8,142.0 102.2,141.0 103.8,137.5 105.2,141.0 106.8,141.0 108.2,143.0 109.8,145.0 111.2,146.0 112.8,147.0 114.2,148.0 115.8,150.0 117.2,151.0 118.8,153.0 120.2,153.0 121.8,156.0 123.2,156.0 124.8,157.0 126.2,158.0 127.8,160.0 129.2,161.0 130.8,162.0 132.2,165.0 133.8,165.0 135.2,166.0 136.8,167.0 138.2,169.0 139.8,170.0 141.2,171.0 142.8,172.0 144.2,174.0 145.8,175.0 147.2,175.0 148.8,177.0 150.2,179.0 151.8,180.0 153.2,181.0 154.8,183.0 156.2,185.0 157.8,185.0 159.2,186.0 160.8,188.0 162.2,189.0 163.8,189.0 165.2,189.0 166.8,189.0 168.2,188.0 169.8,186.0 171.2,185.0 172.8,184.0 174.2,183.0 175.8,181.0 177.2,180.0 178.8,179.0 180.2,178.0 181.8,176.0 183.2,175.0 184.8,174.0 186.2,172.0 187.8,171.0 189.2,170.0 190.8,169.0 192.2,167.0 193.8,166.0 195.2,165.0 196.8,164.0 198.2,162.0 199.8,161.0 201.2,160.0 202.8,159.0 204.2,157.0 205.8,156.0 207.2,156.0 208.8,153.0 210.2,153.0 211.8,151.0 213.2,150.0 214.8,148.0 216.2,147.0 217.8,147.0 219.2,145.0 220.8,143.0 222.2,142.0 223.8,141.0 225.2,137.5 226.8,141.0 228.2,142.0 229.8,144.0 231.2,144.0 232.8,146.0 234.2,147.0 235.8,148.0 237.2,149.0 238.8,151.0 240.2,152.0 241.8,153.0 243.2,154.0 244.8,157.0 246.2,157.0 247.8,158.0 249.2,160.0 250.8,161.0 252.2,162.0 253.8,163.0 255.2,165.0 256.8,166.0 258.2,166.0 259.8,168.0 261.2,170.0 262.8,171.0 264.2,172.0 265.8,173.0 267.2,175.0 268.8,176.0 270.2,177.0 271.8,178.0 273.2,180.0 274.8,181.0 276.2,182.0 277.8,184.0 279.2,185.0 280.8,186.0 282.2,187.0 283.8,189.0 285.2,189.0 286.8,190.0 288.2,189.0 289.8,188.0 291.2,187.0 292.8,185.0 294.2,184.0 295.8,183.0 297.2,182.0 298.8,180.0 300.2,179.0 301.8,178.0 303.2,176.0 304.8,175.0 306.2,174.0 307.8,173.0 309.2,171.0 310.8,170.0 312.2,169.0 313.8,169.0 315.2,166.0 316.8,165.0 318.2,164.0 319.8,163.0 321.2,161.0 322.8,160.0 324.2,160.0 325.8,157.0 327.2,156.0 328.8,156.0 330.2,154.0 331.8,152.0 333.2,151.0 334.8,150.0 336.2,149.0 337.8,147.0 339.2,146.0 340.8,145.0 342.2,144.0 343.8,143.0 345.2,141.0 346.8,137.5 348.2,140.0 349.8,142.0 351.2,143.0 352.8,144.0 354.2,145.0 355.8,147.0 357.2,148.0 358.8,149.0 360.2,150.0 361.8,152.0 363.2,152.0 364.8,154.0 366.2,156.0 367.8,157.0 369.2,158.0 370.8,159.0 372.2,161.0 373.8,162.0 375.2,163.0 376.8,164.0 378.2,166.0 379.8,167.0 381.2,168.0 382.8,170.0 384.2,171.0 385.8,172.0 387.2,173.0 388.8,175.0 390.2,176.0 391.8,177.0 393.2,178.0 394.8,180.0 396.2,181.0 397.8,182.0 399.2,183.0 400.8,186.0 402.2,186.0 403.8,187.0 405.2,188.0 406.8,189.0 408.2,190.0 409.8,189.0 411.2,188.0 412.8,186.0 414.2,186.0 415.8,184.0 417.2,183.0 418.8,182.0 420.2,180.0 421.8,179.0 423.2,178.0 424.8,177.0 426.2,175.0 427.8,174.0 429.2,173.0 430.8,172.0 432.2,170.0 433.8,170.0 435.2,168.0 436.8,167.0 438.2,165.0 439.8,164.0 441.2,163.0 442.8,161.0 444.2,160.0 445.8,159.0 447.2,158.0 448.8,156.0 450.2,155.0 451.8,154.0 453.2,153.0 454.8,151.0 456.2,150.0 457.8,149.0 459.2,148.0 460.8,146.0 462.2,144.0 463.8,144.0 465.2,142.0 466.8,141.0 468.2,137.5 469.8,137.5 471.2,141.0 472.8,143.0 474.2,143.0 475.8,145.0 477.2,146.0 478.8,148.0 480.2,149.0 481.8,150.0 483.2,152.0 484.8,153.0 486.2,154.0 487.8,155.0 489.2,158.0 490.8,158.0 492.2,160.0 493.8,160.0 495.2,162.0 496.8,163.0 498.2,164.0 499.8,165.0 501.2,167.0 502.8,168.0 504.2,169.0 505.8,171.0 507.2,172.0 508.8,174.0 510.2,174.0 511.8,176.0 513.2,177.0 514.8,177.0 516.2,179.0 517.8,182.0 519.2,182.0 520.8,183.0 522.2,184.0 523.8,186.0 525.2,187.0 526.8,188.0 528.2,189.0 529.8,189.0 531.2,189.0 532.8,188.0 534.2,187.0 535.8,186.0 537.2,184.0 538.8,183.0 540.2,182.0 541.8,181.0 543.2,179.0 544.8,179.0 546.2,177.0 547.8,176.0 549.2,174.0 550.8,173.0 552.2,172.0 553.8,171.0 555.2,169.0 556.8,168.0 558.2,167.0 559.8,165.0 561.2,164.0 562.8,162.0 564.2,162.0 565.8,160.0 567.2,159.0 568.8,158.0 570.2,157.0 571.8,156.0 573.2,154.0 574.8,153.0 576.2,152.0 577.8,150.0 579.2,148.0 580.8,149.0 582.2,146.0 583.8,145.0 585.2,144.0 586.8,143.0 588.2,141.0 589.8,137.5 591.2,137.5 592.8,141.0 594.2,142.0 595.8,144.0 597.2,145.0 598.8,146.0 600.2,147.0 601.8,149.0 603.2,150.0 604.8,151.0 606.2,153.0 607.8,154.0 609.2,154.0 610.8,157.0 612.2,158.0 613.8,159.0 615.2,160.0 616.8,161.0 618.2,163.0 619.8,163.0 621.2,165.0 622.8,167.0 624.2,168.0 625.8,169.0 627.2,170.0 628.8,172.0 630.2,173.0" fill="none" stroke="#e8e884" stroke-width="1.55" stroke-linejoin="round"/>
<polyline points="24.2,272.4 27.2,272.4 30.2,272.4 33.2,273.0 36.2,272.4 39.2,272.4 42.2,272.4 44.4,272.4 44.4,217.9 47.4,217.9 50.4,217.9 53.4,217.9 56.4,217.9 59.4,217.9 62.4,217.9 65.4,217.9 68.4,217.3 69.0,217.9 69.0,272.4 72.0,272.4 75.0,272.4 78.0,272.4 81.0,272.4 84.0,272.4 87.0,272.4 90.0,272.4 93.0,272.4 96.0,272.4 99.0,272.4 102.0,272.4 105.0,272.4 108.0,272.4 111.0,272.4 114.0,272.4 117.0,272.4 120.0,272.4 123.0,272.4 126.0,272.4 129.0,272.4 132.0,272.4 135.0,272.4 138.0,272.4 141.0,272.4 144.0,272.4 147.0,272.4 150.0,272.4 153.0,272.4 156.0,272.4 159.0,271.8 162.0,272.4 165.0,271.8 168.0,272.4 171.0,272.4 174.0,272.4 177.0,272.4 180.0,272.4 183.0,273.0 186.0,272.4 189.0,272.4 192.0,272.4 195.0,272.4 198.0,272.4 201.0,271.8 204.0,271.8 207.0,272.4 210.0,272.4 213.0,273.0 216.0,272.4 219.0,272.4 222.0,272.4 225.0,272.4 228.0,272.4 231.0,272.4 234.0,272.4 237.0,272.4 240.0,272.4 243.0,272.4 246.0,272.4 249.0,272.4 252.0,272.4 255.0,272.4 258.0,272.4 261.0,272.4 264.0,272.4 267.0,271.8 270.0,272.4 273.0,272.4 276.0,272.4 279.0,272.4 282.0,273.0 285.0,272.4 288.0,272.4 288.0,217.9 291.0,218.5 294.0,217.9 297.0,217.9 300.0,217.9 303.0,217.9 306.0,217.9 309.0,217.9 312.0,217.9 312.6,217.9 312.6,272.4 315.6,272.4 318.6,272.4 321.6,271.8 324.6,272.4 327.6,272.4 330.6,272.4 333.6,272.4 336.6,272.4 339.6,273.0 342.6,272.4 345.6,272.4 348.6,272.4 351.6,272.4 354.6,272.4 357.6,272.4 360.6,272.4 363.6,272.4 366.6,272.4 369.6,271.8 372.6,272.4 375.6,273.0 378.6,271.8 381.6,272.4 384.6,272.4 387.6,272.4 390.6,272.4 393.6,272.4 396.6,272.4 399.6,272.4 402.6,272.4 405.6,272.4 408.6,272.4 411.6,272.4 414.6,272.4 417.6,272.4 420.6,272.4 423.6,272.4 426.6,273.0 429.6,272.4 432.6,272.4 435.6,273.0 438.6,272.4 441.6,272.4 444.6,271.8 447.6,272.4 450.6,271.8 453.6,272.4 456.6,272.4 459.6,272.4 462.6,272.4 465.6,272.4 468.6,272.4 471.6,272.4 474.6,272.4 477.6,272.4 480.6,272.4 483.6,272.4 486.6,272.4 489.6,272.4 492.6,272.4 495.6,272.4 498.6,272.4 501.6,272.4 504.6,272.4 507.6,272.4 510.6,272.4 513.6,272.4 516.6,272.4 519.6,272.4 522.6,272.4 525.6,272.4 528.6,272.4 531.6,272.4 531.6,217.9 534.6,217.9 537.6,217.9 540.6,217.9 543.6,217.9 546.6,217.9 549.6,217.9 552.6,217.9 555.6,217.9 556.2,217.9 556.2,272.4 559.2,272.4 562.2,272.4 565.2,272.4 568.2,271.8 571.2,272.4 574.2,273.0 577.2,271.8 580.2,272.4 583.2,272.4 586.2,272.4 589.2,271.8 592.2,272.4 595.2,272.4 598.2,272.4 601.2,272.4 604.2,272.4 607.2,273.0 610.2,272.4 613.2,272.4 616.2,272.4 619.2,272.4 622.2,272.4 625.2,272.4 628.2,272.4 630.9,272.4" fill="none" stroke="#58d2d8" stroke-width="1.45"/>
<polyline points="24.2,400.3 27.2,400.3 30.2,400.3 30.6,400.3 30.6,349.9 33.6,349.9 36.6,349.9 39.6,349.9 42.6,349.9 45.6,349.9 48.6,349.9 51.6,349.9 54.6,349.9 57.6,349.9 60.6,349.9 63.6,349.9 66.6,349.9 69.6,349.9 72.6,349.3 75.6,349.9 78.6,349.9 81.6,349.9 84.6,349.9 87.6,349.9 90.6,349.9 91.5,349.9 91.5,400.3 94.5,400.3 97.5,400.3 100.5,400.3 103.5,400.3 106.5,400.3 109.5,400.3 112.5,400.3 115.5,400.3 118.5,400.3 121.5,400.3 124.5,400.3 127.5,400.3 130.5,400.3 133.5,400.3 136.5,400.9 139.5,400.3 142.5,400.9 145.5,400.3 148.5,400.3 151.5,400.3 152.4,400.3 152.4,349.9 155.4,349.9 158.4,349.9 161.4,349.3 164.4,349.9 167.4,349.9 170.4,349.3 173.4,349.9 176.4,349.3 179.4,349.9 182.4,349.9 185.4,349.9 188.4,349.9 191.4,349.9 194.4,349.9 197.4,349.9 200.4,349.9 203.4,349.9 206.4,349.9 209.4,349.9 212.4,349.9 213.3,349.9 213.3,400.3 216.3,400.3 219.3,400.3 222.3,400.3 225.3,400.3 228.3,399.7 231.3,400.3 234.3,399.7 237.3,400.3 240.3,400.3 243.3,400.3 246.3,399.7 249.3,400.3 252.3,400.3 255.3,400.3 258.3,400.3 261.3,400.3 264.3,400.3 267.3,400.3 270.3,400.3 273.3,400.3 274.2,400.3 274.2,349.3 277.2,349.9 280.2,349.9 283.2,349.9 286.2,349.9 289.2,349.9 292.2,349.9 295.2,349.9 298.2,349.9 301.2,349.9 304.2,349.9 307.2,349.9 310.2,349.9 313.2,349.9 316.2,349.9 319.2,350.5 322.2,349.9 325.2,349.9 328.2,349.9 331.2,349.9 334.2,349.9 335.1,349.9 335.1,399.7 338.1,400.3 341.1,400.3 344.1,399.7 347.1,400.9 350.1,400.3 353.1,400.3 356.1,400.3 359.1,400.3 362.1,400.3 365.1,400.3 368.1,400.3 371.1,400.3 374.1,400.3 377.1,400.3 380.1,400.3 383.1,400.3 386.1,400.3 389.1,400.3 392.1,400.3 395.1,400.3 396.0,400.3 396.0,349.9 399.0,349.3 402.0,349.9 405.0,349.9 408.0,349.9 411.0,349.9 414.0,349.9 417.0,349.9 420.0,349.9 423.0,349.9 426.0,349.9 429.0,349.9 432.0,349.9 435.0,349.9 438.0,349.9 441.0,349.3 444.0,349.9 447.0,349.9 450.0,349.9 453.0,349.9 456.0,349.9 456.9,349.9 456.9,400.3 459.9,400.3 462.9,400.3 465.9,400.3 468.9,400.3 471.9,400.3 474.9,400.3 477.9,400.3 480.9,400.3 483.9,400.3 486.9,400.3 489.9,400.3 492.9,400.3 495.9,400.3 498.9,400.3 501.9,400.3 504.9,400.3 507.9,400.3 510.9,400.3 513.9,400.3 516.9,400.3 517.8,400.3 517.8,349.9 520.8,349.9 523.8,349.3 526.8,349.9 529.8,349.9 532.8,349.9 535.8,349.9 538.8,349.9 541.8,349.9 544.8,349.9 547.8,349.9 550.8,349.9 553.8,349.9 556.8,349.9 559.8,349.9 562.8,349.9 565.8,349.9 568.8,349.9 571.8,349.9 574.8,349.9 577.8,349.9 578.7,349.9 578.7,400.3 581.7,400.3 584.7,400.3 587.7,400.3 590.7,400.3 593.7,400.3 596.7,400.3 599.7,400.3 602.7,399.7 605.7,400.3 608.7,400.3 611.7,400.3 614.7,400.3 617.7,400.3 620.7,400.3 623.7,400.3 626.7,400.3 629.7,400.3 630.9,400.3" fill="none" stroke="#cc46d2" stroke-width="1.5"/>
<polyline points="24.2,461.0 25.8,461.0 27.2,460.0 28.8,459.0 30.2,459.0 31.8,459.0 33.2,459.0 34.8,459.0 36.2,459.0 37.8,459.0 39.2,459.0 40.8,459.0 42.2,459.0 43.8,460.0 45.2,461.0 46.8,461.0 48.2,462.0 49.8,463.0 51.2,465.0 52.8,466.0 54.2,467.0 55.8,468.0 57.2,470.0 58.8,471.0 60.2,473.0 61.8,475.0 63.2,476.0 64.8,478.0 66.2,480.0 67.8,481.0 69.2,483.0 70.8,484.0 72.2,486.0 73.8,488.0 75.2,489.0 76.8,491.0 78.2,492.0 79.8,493.0 81.2,494.0 82.8,496.0 84.2,497.0 85.8,498.0 87.2,498.0 88.8,499.0 90.2,500.0 91.8,500.0 93.2,500.0 94.8,500.0 96.2,500.0 97.8,500.0 99.2,500.0 100.8,500.0 102.2,500.0 103.8,500.0 105.2,499.0 106.8,498.0 108.2,497.0 109.8,496.0 111.2,495.0 112.8,494.0 114.2,493.0 115.8,492.0 117.2,490.0 118.8,489.0 120.2,487.0 121.8,486.0 123.2,484.0 124.8,482.0 126.2,481.0 127.8,479.0 129.2,477.0 130.8,476.0 132.2,474.0 133.8,473.0 135.2,471.0 136.8,470.0 138.2,468.0 139.8,467.0 141.2,465.0 142.8,464.0 144.2,463.0 145.8,462.0 147.2,461.0 148.8,460.0 150.2,460.0 151.8,459.0 153.2,459.0 154.8,459.0 156.2,459.0 157.8,459.0 159.2,459.0 160.8,459.0 162.2,459.0 163.8,459.0 165.2,459.0 166.8,460.0 168.2,461.0 169.8,462.0 171.2,463.0 172.8,464.0 174.2,465.0 175.8,466.0 177.2,467.0 178.8,469.0 180.2,470.0 181.8,472.0 183.2,473.0 184.8,475.0 186.2,477.0 187.8,478.0 189.2,480.0 190.8,482.0 192.2,483.0 193.8,485.0 195.2,486.0 196.8,488.0 198.2,489.0 199.8,491.0 201.2,492.0 202.8,494.0 204.2,495.0 205.8,496.0 207.2,497.0 208.8,498.0 210.2,499.0 211.8,499.0 213.2,500.0 214.8,500.0 216.2,500.0 217.8,500.0 219.2,500.0 220.8,500.0 222.2,500.0 223.8,500.0 225.2,500.0 226.8,499.0 228.2,499.0 229.8,498.0 231.2,497.0 232.8,496.0 234.2,495.0 235.8,494.0 237.2,493.0 238.8,491.0 240.2,490.0 241.8,488.0 243.2,487.0 244.8,485.0 246.2,484.0 247.8,482.0 249.2,480.0 250.8,479.0 252.2,477.0 253.8,475.0 255.2,474.0 256.8,472.0 258.2,471.0 259.8,469.0 261.2,468.0 262.8,466.0 264.2,465.0 265.8,464.0 267.2,463.0 268.8,462.0 270.2,461.0 271.8,460.0 273.2,459.0 274.8,459.0 276.2,459.0 277.8,459.0 279.2,459.0 280.8,459.0 282.2,459.0 283.8,459.0 285.2,459.0 286.8,459.0 288.2,459.0 289.8,460.0 291.2,461.0 292.8,462.0 294.2,463.0 295.8,464.0 297.2,465.0 298.8,466.0 300.2,468.0 301.8,469.0 303.2,471.0 304.8,472.0 306.2,474.0 307.8,475.0 309.2,477.0 310.8,479.0 312.2,480.0 313.8,482.0 315.2,484.0 316.8,485.0 318.2,487.0 319.8,488.0 321.2,490.0 322.8,491.0 324.2,493.0 325.8,494.0 327.2,495.0 328.8,496.0 330.2,497.0 331.8,498.0 333.2,499.0 334.8,499.0 336.2,500.0 337.8,500.0 339.2,500.0 340.8,500.0 342.2,500.0 343.8,500.0 345.2,500.0 346.8,500.0 348.2,500.0 349.8,499.0 351.2,499.0 352.8,498.0 354.2,497.0 355.8,496.0 357.2,495.0 358.8,493.0 360.2,492.0 361.8,491.0 363.2,489.0 364.8,488.0 366.2,486.0 367.8,485.0 369.2,483.0 370.8,481.0 372.2,480.0 373.8,478.0 375.2,477.0 376.8,475.0 378.2,473.0 379.8,472.0 381.2,470.0 382.8,469.0 384.2,467.0 385.8,466.0 387.2,465.0 388.8,464.0 390.2,463.0 391.8,462.0 393.2,461.0 394.8,460.0 396.2,459.0 397.8,459.0 399.2,459.0 400.8,459.0 402.2,459.0 403.8,459.0 405.2,459.0 406.8,459.0 408.2,459.0 409.8,459.0 411.2,460.0 412.8,460.0 414.2,461.0 415.8,462.0 417.2,463.0 418.8,464.0 420.2,465.0 421.8,467.0 423.2,468.0 424.8,470.0 426.2,471.0 427.8,473.0 429.2,474.0 430.8,476.0 432.2,478.0 433.8,479.0 435.2,481.0 436.8,482.0 438.2,484.0 439.8,486.0 441.2,487.0 442.8,489.0 444.2,490.0 445.8,492.0 447.2,493.0 448.8,494.0 450.2,495.0 451.8,496.0 453.2,497.0 454.8,498.0 456.2,499.0 457.8,500.0 459.2,500.0 460.8,500.0 462.2,500.0 463.8,500.0 465.2,500.0 466.8,500.0 468.2,500.0 469.8,500.0 471.2,500.0 472.8,499.0 474.2,498.0 475.8,498.0 477.2,497.0 478.8,496.0 480.2,494.0 481.8,493.0 483.2,492.0 484.8,490.0 486.2,489.0 487.8,487.0 489.2,486.0 490.8,484.0 492.2,483.0 493.8,481.0 495.2,479.0 496.8,478.0 498.2,476.0 499.8,474.0 501.2,473.0 502.8,471.0 504.2,470.0 505.8,468.0 507.2,467.0 508.8,466.0 510.2,464.0 511.8,463.0 513.2,462.0 514.8,461.0 516.2,460.0 517.8,460.0 519.2,459.0 520.8,459.0 522.2,459.0 523.8,459.0 525.2,459.0 526.8,459.0 528.2,459.0 529.8,459.0 531.2,459.0 532.8,459.0 534.2,460.0 535.8,461.0 537.2,461.0 538.8,462.0 540.2,463.0 541.8,465.0 543.2,466.0 544.8,467.0 546.2,469.0 547.8,470.0 549.2,472.0 550.8,473.0 552.2,475.0 553.8,476.0 555.2,478.0 556.8,480.0 558.2,481.0 559.8,483.0 561.2,485.0 562.8,486.0 564.2,488.0 565.8,489.0 567.2,491.0 568.8,492.0 570.2,493.0 571.8,495.0 573.2,496.0 574.8,497.0 576.2,498.0 577.8,498.0 579.2,499.0 580.8,500.0 582.2,500.0 583.8,500.0 585.2,500.0 586.8,500.0 588.2,500.0 589.8,500.0 591.2,500.0 592.8,500.0 594.2,500.0 595.8,499.0 597.2,498.0 598.8,497.0 600.2,496.0 601.8,495.0 603.2,494.0 604.8,493.0 606.2,491.0 607.8,490.0 609.2,489.0 610.8,487.0 612.2,485.0 613.8,484.0 615.2,482.0 616.8,481.0 618.2,479.0 619.8,477.0 621.2,476.0 622.8,474.0 624.2,472.0 625.8,471.0 627.2,469.0 628.8,468.0 630.2,467.0" fill="none" stroke="#44c044" stroke-width="1.6" stroke-linejoin="round"/>
<path d="M8.5,152.9h9l4,4.6l-4,4.6h-9z" fill="#f0f030"/>
<text x="11.5" y="160.7" font-size="8" fill="#303030" font-weight="bold" >1</text>
<path d="M8.5,258.4h9l4,4.6l-4,4.6h-9z" fill="#30d0e0"/>
<text x="11.5" y="266.2" font-size="8" fill="#303030" font-weight="bold" >2</text>
<path d="M8.5,366.9h9l4,4.6l-4,4.6h-9z" fill="#e030e0"/>
<text x="11.5" y="374.7" font-size="8" fill="#303030" font-weight="bold" >3</text>
<path d="M8.5,473.0h9l4,4.6l-4,4.6h-9z" fill="#30d030"/>
<text x="11.5" y="480.8" font-size="8" fill="#303030" font-weight="bold" >4</text>
<path d="M646,154h-8.5l-4,4.5l4,4.5h8.5z" fill="#f0f030"/>
<text x="638" y="161.5" font-size="8" fill="#303030" font-weight="bold" >T</text>
<path d="M322.5,92.5h9.5v6.5l-4.75,3.5l-4.75,-3.5z" fill="#f08c28"/>
<text x="324.8" y="100.3" font-size="8" fill="#902010" font-weight="bold" >T</text>
<rect x="24" y="543" width="67.5" height="13.5" fill="#000"/>
<rect x="23.6" y="544" width="21.4" height="11.3" fill="#f0f028"/>
<text x="25" y="553.5" font-size="10.5" fill="#000" textLength="19" lengthAdjust="spacingAndGlyphs" stroke="#000" stroke-width="0.3">CH1</text>
<path d="M46.5,550.5c1.5,-3 2.5,-3 3.5,0s2,3 3.5,0" fill="none" stroke="#e0e040" stroke-width="1.1"/>
<text x="58" y="553.5" font-size="10.5" fill="#e0e040" textLength="28.7" lengthAdjust="spacingAndGlyphs" stroke="#e0e040" stroke-width="0.2">200mV</text>
<rect x="102" y="543" width="75" height="13.5" fill="#000"/>
<text x="108.8" y="553.5" font-size="10.5" fill="#40b8d0" textLength="18.5" lengthAdjust="spacingAndGlyphs" >CH2</text>
<path d="M130,550.5c1.5,-3 2.5,-3 3.5,0s2,3 3.5,0" fill="none" stroke="#40b8d0" stroke-width="1.1"/>
<text x="141.9" y="553.5" font-size="10.5" fill="#40b8d0" textLength="28.8" lengthAdjust="spacingAndGlyphs" >100mV</text>
<rect x="190" y="543" width="70" height="13.5" fill="#000"/>
<text x="192" y="553.5" font-size="10.5" fill="#b030b0" textLength="18.5" lengthAdjust="spacingAndGlyphs" >CH3</text>
<path d="M213,550.5c1.5,-3 2.5,-3 3.5,0s2,3 3.5,0" fill="none" stroke="#b030b0" stroke-width="1.1"/>
<text x="225" y="553.5" font-size="10.5" fill="#b030b0" textLength="28.8" lengthAdjust="spacingAndGlyphs" >200mV</text>
<rect x="273" y="543" width="71" height="13.5" fill="#000"/>
<text x="275.5" y="553.5" font-size="10.5" fill="#30b830" textLength="18.5" lengthAdjust="spacingAndGlyphs" >CH4</text>
<path d="M297,550.5c1.5,-3 2.5,-3 3.5,0s2,3 3.5,0" fill="none" stroke="#30b830" stroke-width="1.1"/>
<text x="310" y="553.5" font-size="10.5" fill="#30b830" textLength="25" lengthAdjust="spacingAndGlyphs" >5.00V</text>
<rect x="345.5" y="542.5" width="215" height="14.5" fill="#2c2b2c" stroke="#262626" stroke-width="1"/>
<rect x="562.5" y="543" width="68" height="14" fill="#000"/>
<text x="565" y="553.5" font-size="10.5" fill="#d88a40" textLength="59" lengthAdjust="spacingAndGlyphs" >Time: 500.0us</text>
</svg>
<svg width="800" height="581" viewBox="0 0 800 581" style="position:absolute;left:0;top:0" font-family="Liberation Sans">
<text x="22" y="14.5" font-size="11" fill="#1c2c44" textLength="92" lengthAdjust="spacingAndGlyphs" stroke="#1c2c44" stroke-width="0.3">DSO-6000 - [Scope1]</text>
<text x="28.8" y="33.0" font-size="10" fill="#1a1a1a" textLength="17.5" lengthAdjust="spacingAndGlyphs" stroke="#1a1a1a" stroke-width="0.3">文件</text>
<text x="46.9" y="33.6" font-size="11" fill="#1a1a1a" textLength="10.2" lengthAdjust="spacingAndGlyphs" stroke="#1a1a1a" stroke-width="0.15">(F)</text>
<text x="68.0" y="33.0" font-size="10" fill="#1a1a1a" textLength="18.6" lengthAdjust="spacingAndGlyphs" stroke="#1a1a1a" stroke-width="0.3">视图</text>
<text x="87.2" y="33.6" font-size="11" fill="#1a1a1a" textLength="10.8" lengthAdjust="spacingAndGlyphs" stroke="#1a1a1a" stroke-width="0.15">(V)</text>
<text x="109.0" y="33.0" font-size="10" fill="#1a1a1a" textLength="18.6" lengthAdjust="spacingAndGlyphs" stroke="#1a1a1a" stroke-width="0.3">设置</text>
<text x="128.2" y="33.6" font-size="11" fill="#1a1a1a" textLength="10.8" lengthAdjust="spacingAndGlyphs" stroke="#1a1a1a" stroke-width="0.15">(S)</text>
<text x="149.0" y="33.0" font-size="10" fill="#1a1a1a" textLength="19.2" lengthAdjust="spacingAndGlyphs" stroke="#1a1a1a" stroke-width="0.3">显示</text>
<text x="168.8" y="33.6" font-size="11" fill="#1a1a1a" textLength="11.2" lengthAdjust="spacingAndGlyphs" stroke="#1a1a1a" stroke-width="0.15">(D)</text>
<text x="191.4" y="33.0" font-size="10" fill="#1a1a1a" textLength="18.7" lengthAdjust="spacingAndGlyphs" stroke="#1a1a1a" stroke-width="0.3">光标</text>
<text x="210.7" y="33.6" font-size="11" fill="#1a1a1a" textLength="10.9" lengthAdjust="spacingAndGlyphs" stroke="#1a1a1a" stroke-width="0.15">(C)</text>
<text x="232.6" y="33.0" font-size="10" fill="#1a1a1a" textLength="20.1" lengthAdjust="spacingAndGlyphs" stroke="#1a1a1a" stroke-width="0.3">测量</text>
<text x="253.3" y="33.6" font-size="11" fill="#1a1a1a" textLength="11.7" lengthAdjust="spacingAndGlyphs" stroke="#1a1a1a" stroke-width="0.15">(M)</text>
<text x="275.9" y="33.0" font-size="10" fill="#1a1a1a" textLength="18.7" lengthAdjust="spacingAndGlyphs" stroke="#1a1a1a" stroke-width="0.3">获取</text>
<text x="295.2" y="33.6" font-size="11" fill="#1a1a1a" textLength="10.8" lengthAdjust="spacingAndGlyphs" stroke="#1a1a1a" stroke-width="0.15">(A)</text>
<text x="316.5" y="33.0" font-size="10" fill="#1a1a1a" textLength="19.2" lengthAdjust="spacingAndGlyphs" stroke="#1a1a1a" stroke-width="0.3">辅助</text>
<text x="336.3" y="33.6" font-size="11" fill="#1a1a1a" textLength="11.1" lengthAdjust="spacingAndGlyphs" stroke="#1a1a1a" stroke-width="0.15">(U)</text>
<text x="358.0" y="33.0" font-size="10" fill="#1a1a1a" textLength="20.5" lengthAdjust="spacingAndGlyphs" stroke="#1a1a1a" stroke-width="0.3">窗口</text>
<text x="379.1" y="33.6" font-size="11" fill="#1a1a1a" textLength="11.9" lengthAdjust="spacingAndGlyphs" stroke="#1a1a1a" stroke-width="0.15">(W)</text>
<text x="402.6" y="33.0" font-size="10" fill="#1a1a1a" textLength="19.2" lengthAdjust="spacingAndGlyphs" stroke="#1a1a1a" stroke-width="0.3">帮助</text>
<text x="422.4" y="33.6" font-size="11" fill="#1a1a1a" textLength="11.1" lengthAdjust="spacingAndGlyphs" stroke="#1a1a1a" stroke-width="0.15">(H)</text>
<rect x="12" y="25" width="10" height="8" fill="#2a302a" stroke="#4a5058" stroke-width="0.8"/><rect x="13.5" y="26.5" width="7" height="5" fill="#4a5a3a"/><path d="M14,34.5h6" stroke="#404850" stroke-width="1.3"/>
<path d="M755,32.5h4.5" stroke="#404040" stroke-width="1.3"/>
<path d="M769,29.5h5v4h-5zM771,29.5v-2h5v4h-2" fill="none" stroke="#505050" stroke-width="0.9"/>
<path d="M784.5,27.5l5,5M789.5,27.5l-5,5" stroke="#404040" stroke-width="1.2"/>
<text x="8" y="571.5" font-size="10" fill="#202020" textLength="27" lengthAdjust="spacingAndGlyphs" stroke="#202020" stroke-width="0.25">已连接</text>
<text x="700.2" y="571.5" font-size="10" fill="#1a1a1a" textLength="50" lengthAdjust="spacingAndGlyphs" stroke="#1a1a1a" stroke-width="0.25">22-02-2016</text>
<text x="757.2" y="571.5" font-size="10" fill="#1a1a1a" textLength="22.3" lengthAdjust="spacingAndGlyphs" stroke="#1a1a1a" stroke-width="0.25">10:41</text>
</svg>
</body></html>
